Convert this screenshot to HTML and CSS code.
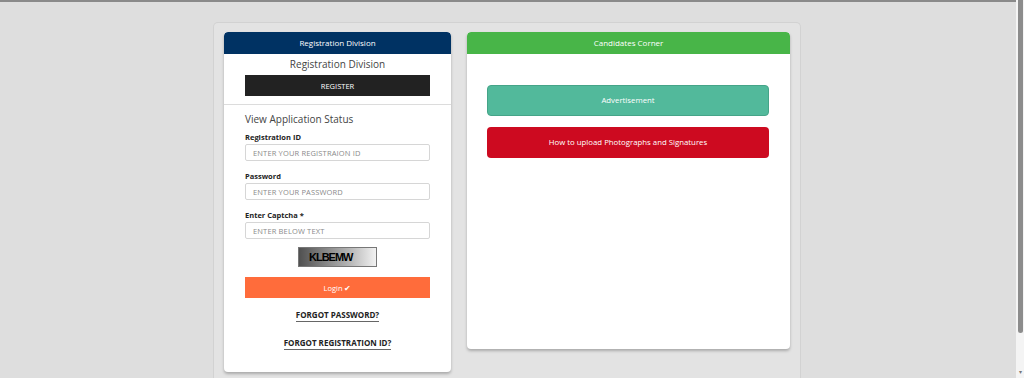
FILE: index.html
```html
<!DOCTYPE html>
<html>
<head>
    <meta charset="UTF-8">
    <meta name="viewport" content="width=device-width, initial-scale=1.0">
    <title>Registration Division</title>
    <link rel="stylesheet" href="styles.css">
</head>
<body>
    <div id="page">
        <div id="main">
            <div id="wrapper">
                <div class="card card-left">
                    <div class="card-header header-navy">Registration Division</div>
                    <div class="card-body">
                        <div class="section-title center">Registration Division</div>
                        <button class="btn btn-dark">REGISTER</button>
                    </div>
                    <hr class="divider">
                    <form class="card-body login-form" onsubmit="return false;">
                        <div class="section-title">View Application Status</div>
                        <label for="regid">Registration ID</label>
                        <input id="regid" type="text" placeholder="ENTER YOUR REGISTRAION ID">
                        <label for="pwd">Password</label>
                        <input id="pwd" type="password" placeholder="ENTER YOUR PASSWORD">
                        <label for="captcha">Enter Captcha *</label>
                        <input id="captcha" type="text" placeholder="ENTER BELOW TEXT">
                        <div class="captcha-img">KLBEMW</div>
                        <button class="btn btn-orange">Login <span class="tick">&#10004;</span></button>
                        <a class="link" href="#">FORGOT PASSWORD?</a>
                        <a class="link" href="#">FORGOT REGISTRATION ID?</a>
                    </form>
                </div>
                <div class="card card-right">
                    <div class="card-header header-green">Candidates Corner</div>
                    <div class="card-body corner-body">
                        <a class="btn btn-block btn-teal" href="#">Advertisement</a>
                        <a class="btn btn-block btn-red" href="#">How to upload Photographs and Signatures</a>
                    </div>
                </div>
            </div>
        </div>
        <div id="scrollbar">
            <div class="thumb"></div>
            <div class="arrow">&#9662;</div>
        </div>
    </div>
</body>
</html>
```

FILE: styles.css
```css
html, body {
    margin: 0;
    padding: 0;
    height: 100%;
    overflow: hidden;
}
body {
    font-family: "Open Sans", "Noto Sans", sans-serif;
    background-color: #dedede;
    color: #333;
}
#page {
    display: flex;
    height: 100%;
}
#main {
    flex: 1;
    border-top: 2px solid #8a8a8a;
    padding-top: 20px;
}
#wrapper {
    width: 566px;
    margin-left: 213px;
    padding: 9px 10px 0 10px;
    background-color: #e3e3e3;
    border: 1px solid #d2d2d2;
    border-bottom: none;
    border-radius: 5px 5px 0 0;
    display: grid;
    grid-template-columns: 227px 323px;
    gap: 16px;
    align-items: start;
    height: 400px;
}
.card {
    background-color: white;
    border-radius: 4px;
    box-shadow: 0 2px 3px rgba(0,0,0,0.25);
    overflow: hidden;
}
.card-left {
    height: 340px;
}
.card-right {
    height: 317px;
}
.card-header {
    height: 22px;
    line-height: 22px;
    text-align: center;
    color: white;
    font-size: 8px;
    border-radius: 4px 4px 0 0;
}
.header-navy {
    background-color: #003263;
}
.header-green {
    background-color: #48b548;
}
.card-body {
    padding: 0 21px;
    display: flex;
    flex-direction: column;
}
.section-title {
    font-size: 10px;
    line-height: 20px;
    color: #444;
}
.center {
    text-align: center;
}
.btn {
    border: none;
    color: white;
    font-family: inherit;
    text-align: center;
    text-decoration: none;
    cursor: pointer;
    font-size: 7.5px;
    padding: 0;
}
.btn-dark {
    background-color: #222;
    height: 21px;
    margin-top: 1px;
}
.divider {
    border: none;
    border-top: 1px solid #dcdcdc;
    margin: 8px 0 5px 0;
}
.login-form label {
    font-size: 7.5px;
    font-weight: 700;
    color: #222;
    line-height: 12px;
    margin-top: 3px;
}
.login-form .section-title {
    line-height: 18px;
}
.login-form input {
    height: 17px;
    box-sizing: border-box;
    border: 1px solid #d6d6d6;
    border-radius: 2px;
    padding: 0 7px;
    font-family: inherit;
    font-size: 7.5px;
    letter-spacing: 0.15px;
    margin: 1px 0 6px 0;
    color: #333;
}
.login-form input::placeholder {
    color: #8a8a8a;
}
.captcha-img {
    align-self: center;
    width: 67px;
    height: 18px;
    margin-top: 2px;
    border: 1px solid #777;
    background: linear-gradient(to right, #505050, #bdbdbd 70%, #f2f2f2);
    color: #000;
    font-family: "Liberation Sans", sans-serif;
    font-weight: bold;
    font-size: 11px;
    letter-spacing: -1px;
    line-height: 18px;
    padding-left: 10px;
    box-sizing: content-box;
}
.btn-orange {
    background-color: #ff6c3b;
    height: 21px;
    margin-top: 10px;
}
.tick {
    font-size: 7.5px;
}
.link {
    align-self: center;
    color: #222;
    font-size: 8px;
    font-weight: bold;
    text-decoration: none;
    border-bottom: 1px solid #666;
    line-height: 12px;
    margin-top: 11px;
}
.link + .link {
    margin-top: 15px;
}
.corner-body {
    padding: 31px 21px 0 20px;
    gap: 11px;
}
.btn-block {
    display: block;
    border-radius: 4px;
    font-size: 7.8px;
}
.btn-teal {
    background-color: #52b99b;
    border: 1px solid #45a488;
    height: 29px;
    line-height: 29px;
}
.btn-red {
    background-color: #cd0a20;
    height: 31px;
    line-height: 31px;
}
#scrollbar {
    width: 8px;
    background-color: #f4f4f4;
    display: flex;
    flex-direction: column;
    align-items: center;
}
.thumb {
    width: 5px;
    height: 333px;
    background-color: #8c8c8c;
    border-radius: 0 0 3px 3px;
}
.arrow {
    margin-top: auto;
    font-size: 6px;
    color: #777;
    line-height: 8px;
    margin-bottom: 2px;
}
```
